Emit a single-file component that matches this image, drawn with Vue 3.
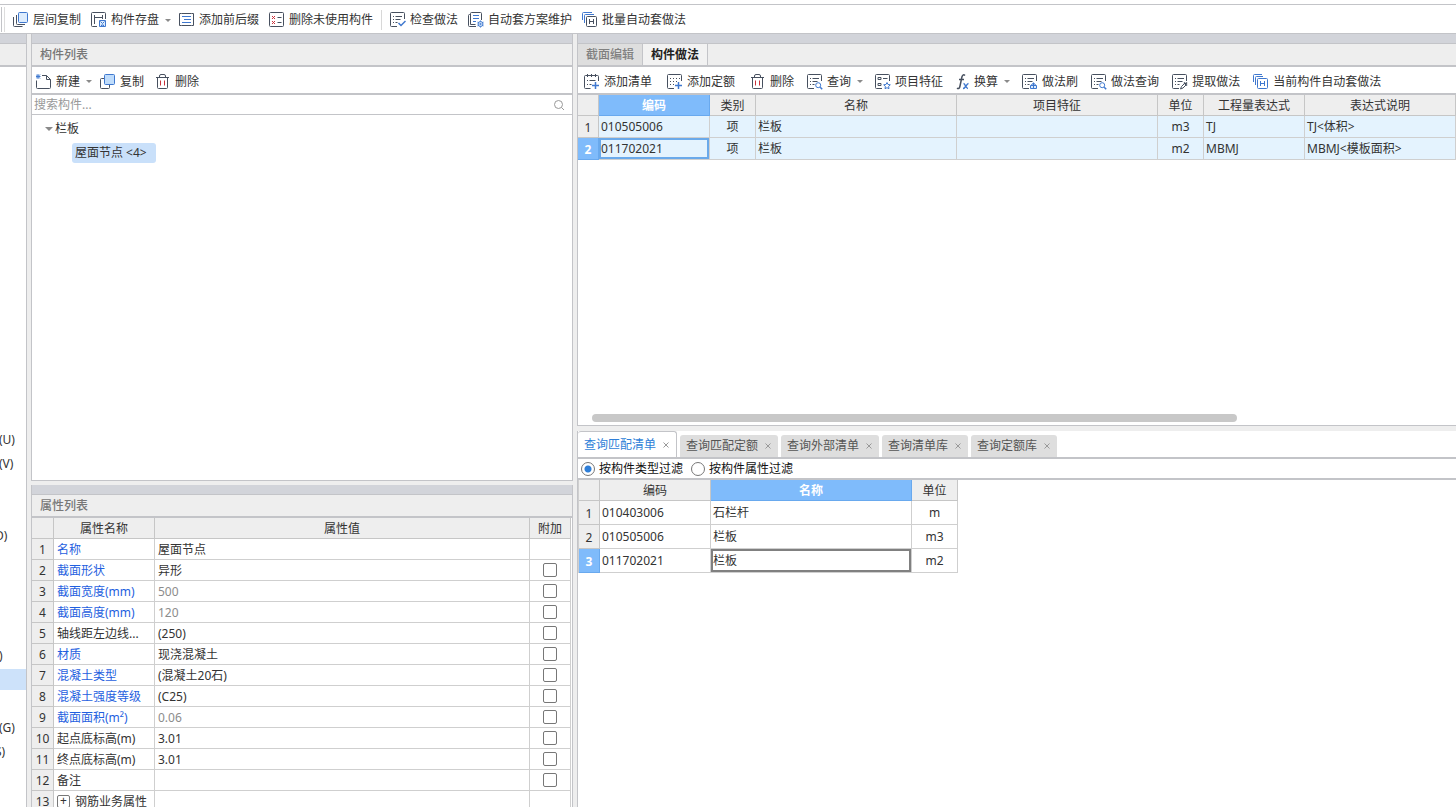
<script setup>
import { ref } from 'vue'

const mainTools = [
  { icon: 'layers', label: '层间复制' },
  { icon: 'save', label: '构件存盘', menu: true },
  { icon: 'prefix', label: '添加前后缀' },
  { icon: 'unused', label: '删除未使用构件' },
  { divider: true },
  { icon: 'check', label: '检查做法' },
  { icon: 'plan', label: '自动套方案维护' },
  { icon: 'batch', label: '批量自动套做法' },
]

const componentTools = [
  { icon: 'new', label: '新建', menu: true },
  { icon: 'copy', label: '复制' },
  { icon: 'trash', label: '删除' },
]

const editTools = [
  { icon: 'addlist', label: '添加清单' },
  { icon: 'addquota', label: '添加定额' },
  { icon: 'trash', label: '删除' },
]

const methodTools = [
  { icon: 'query', label: '查询', menu: true },
  { icon: 'feature', label: '项目特征' },
  { icon: 'fx', label: '换算', menu: true },
  { icon: 'brush', label: '做法刷' },
  { icon: 'query', label: '做法查询' },
  { icon: 'extract', label: '提取做法' },
  { icon: 'auto', label: '当前构件自动套做法' },
]

const navItems = [
  { text: '(U)' }, { text: '(V)' }, {}, {},
  { text: 'D)', clipped: true }, {}, {}, {}, {},
  { text: ')' }, { active: true }, {},
  { text: '(G)' }, { text: 'S)', clipped: true }, {},
]

const properties = [
  { name: '名称', value: '屋面节点', link: true, noCheck: true },
  { name: '截面形状', value: '异形', link: true },
  { name: '截面宽度(mm)', value: '500', link: true, muted: true },
  { name: '截面高度(mm)', value: '120', link: true, muted: true },
  { name: '轴线距左边线...', value: '(250)' },
  { name: '材质', value: '现浇混凝土', link: true },
  { name: '混凝土类型', value: '(混凝土20石)', link: true },
  { name: '混凝土强度等级', value: '(C25)', link: true },
  { name: '截面面积(m²)', value: '0.06', link: true, muted: true },
  { name: '起点底标高(m)', value: '3.01' },
  { name: '终点底标高(m)', value: '3.01' },
  { name: '备注', value: '' },
  { name: '钢筋业务属性', value: '', group: true, noCheck: true },
]

const methods = [
  { code: '010505006', kind: '项', name: '栏板', unit: 'm3', expr: 'TJ', desc: 'TJ<体积>' },
  { code: '011702021', kind: '项', name: '栏板', unit: 'm2', expr: 'MBMJ', desc: 'MBMJ<模板面积>' },
]

const queryTabs = ['查询匹配清单', '查询匹配定额', '查询外部清单', '查询清单库', '查询定额库']
const activeTab = ref(0)

const matches = [
  { code: '010403006', name: '石栏杆', unit: 'm' },
  { code: '010505006', name: '栏板', unit: 'm3' },
  { code: '011702021', name: '栏板', unit: 'm2' },
]

const filterMode = ref('type')
const keyword = ref('')
</script>

<template>
  <div class="app">
    <svg class="defs" aria-hidden="true">
      <symbol id="i-layers" viewBox="0 0 16 16">
        <rect class="b f" x="5.500" y=".5" width="9" height="10" rx="1" />
        <path class="k" d="M3.500 3v8.500a1 1 0 0 0 1 1H12" />
        <path class="k" d="M.5 5v8.500a1 1 0 0 0 1 1h8" />
      </symbol>
      <symbol id="i-save" viewBox="0 0 16 16">
        <path class="k" d="M6 14.500H1.500a1 1 0 0 1-1-1v-12a1 1 0 0 1 1-1h12a1 1 0 0 1 1 1V7M3.500 3v9M3.500 5.500h8M11.500 3v4" />
        <path class="b f" d="M8.500 8.500h6v6h-6z" />
        <path class="b" d="M9.500 9.500l2 2 2-2M10.500 14v-1h2v1" />
      </symbol>
      <symbol id="i-prefix" viewBox="0 0 16 16">
        <path class="k" d="M2.500 1.500H.5v12h2M12.500 1.500h2v12h-2M2.500 1.500h10M2.500 13.500h10" />
        <path class="b" d="M3 4.500h9M5 7.500h7M3 10.500h9" />
      </symbol>
      <symbol id="i-unused" viewBox="0 0 16 16">
        <rect class="k" x=".5" y=".5" width="14" height="14" rx="1" />
        <path class="r" d="M3 4l3 3m0-3l-3 3M3 9l3 3m0-3l-3 3" />
        <path class="k" d="M8.500 5.500h4M8.500 10.500h4" />
      </symbol>
      <symbol id="i-sheet" viewBox="0 0 16 16">
        <path class="k" d="M7 14.500H1.500a1 1 0 0 1-1-1v-12a1 1 0 0 1 1-1h12a1 1 0 0 1 1 1V7" />
        <path class="k" d="M3 4.500h1M5.500 4.500h6.500M3 7.500h1M5.500 7.500h5M3 10.500h1M5.500 10.500h2" />
      </symbol>
      <symbol id="i-check" viewBox="0 0 16 16">
        <use href="#i-sheet" />
        <path class="b w" d="M8.500 11l2.500 2.500L15.500 9" />
      </symbol>
      <symbol id="i-plan" viewBox="0 0 16 16">
        <path class="k" d="M2.500 12.500h5M2.500 12.500v-11a1 1 0 0 1 1-1h9a1 1 0 0 1 1 1V8M2.500 2.500h-1a1 1 0 0 0-1 1v10a1 1 0 0 0 1 1H8" />
        <path class="b" d="M5 3.500h6M5 6.500h6M5 9.500h3" />
        <circle class="b f" cx="12.500" cy="12" r="2.500" />
        <circle class="b" cx="12.500" cy="12" r=".7" />
        <path class="b" d="M12.500 8.500v1M12.500 14.500v1M9.500 10.200l.9.600M14.600 13.200l.9.600M9.500 13.800l.9-.6M14.600 10.800l.9-.6" />
      </symbol>
      <symbol id="i-batch" viewBox="0 0 16 16">
        <path class="b" d="M.5 8V1.500a1 1 0 0 1 1-1H10M2.500 11V3.500a1 1 0 0 1 1-1H12" />
        <rect class="k" x="4.500" y="4.500" width="10" height="10" rx="1" />
        <path class="k" d="M7.500 7v5M11.500 7v5M7.500 9.500h4" />
      </symbol>
      <symbol id="i-new" viewBox="0 0 16 16">
        <path class="k" d="M.5 6.500v7a1 1 0 0 0 1 1h12a1 1 0 0 0 1-1V5.500L10.500 1.500H6M10.500 1.500v4h4" />
        <path class="b" d="M0 .5l4 4M4 .5l-4 4M2 0v5M0 2.500h4.500" />
      </symbol>
      <symbol id="i-copy" viewBox="0 0 16 16">
        <path class="k" d="M4 4.500H1.500a1 1 0 0 0-1 1v8a1 1 0 0 0 1 1h7a1 1 0 0 0 1-1V11" />
        <rect class="b f2" x="4.500" y=".5" width="10" height="10" rx="1" />
      </symbol>
      <symbol id="i-trash" viewBox="0 0 16 16">
        <path class="k" d="M1 3.500h13M4.500 3.500v-1.500a1.500 1.500 0 0 1 1.500-1.500h3a1.500 1.500 0 0 1 1.500 1.500v1.500M2.500 3.500v10a1 1 0 0 0 1 1h8a1 1 0 0 0 1-1v-10" />
        <path class="r" d="M5.500 6.500v5M9.500 6.500v5" />
      </symbol>
      <symbol id="i-addlist" viewBox="0 0 16 16">
        <path class="k" d="M6.500 14.500H1.500a1 1 0 0 1-1-1v-11a1 1 0 0 1 1-1h12a1 1 0 0 1 1 1V7M3.500 0v3M7.500 0v3M11.500 0v3M3 6.500h1M5.500 6.500h6M3 10.500h1M5.500 10.500h2" />
        <path class="b w" d="M11.500 8v7M8 11.500h7" />
      </symbol>
      <symbol id="i-addquota" viewBox="0 0 16 16">
        <path class="k" d="M4 .5H1.500a1 1 0 0 0-1 1v12a1 1 0 0 0 1 1H7M4 .5h9.500a1 1 0 0 1 1 1V7" />
        <path class="k" d="M3 4.500h1M6 4.500h1M9 4.500h1M12 4.500h1M3 7.500h1M6 7.500h1M9 7.500h1M3 10.500h1M6 10.500h1" />
        <path class="b w" d="M11.500 8v7M8 11.500h7" />
      </symbol>
      <symbol id="i-query" viewBox="0 0 16 16">
        <use href="#i-sheet" />
        <circle class="b" cx="11.200" cy="11.200" r="2.500" />
        <path class="b w" d="M13.200 13.200l2 2" />
      </symbol>
      <symbol id="i-feature" viewBox="0 0 16 16">
        <path class="k" d="M7 14.500H1.500a1 1 0 0 1-1-1v-12a1 1 0 0 1 1-1h12a1 1 0 0 1 1 1V7" />
        <path class="k" d="M3 3.500h3v2H3zM3 9.500h3v2H3zM8 4.500h4.500" />
        <path class="b" d="M12 8.500l1 2 2.300.3-1.700 1.600.4 2.300-2-1-2 1 .4-2.300-1.700-1.600 2.300-.3z" />
      </symbol>
      <symbol id="i-fx" viewBox="0 0 14 16">
        <path class="k w" d="M9 1.500C7.500 0 6.300 1.200 5.900 3L4 12c-.4 2.300-1.500 3.200-3 2.200M3 5.500h5" />
        <path class="b w" d="M7.500 9.500c2 0 2 5 4.500 5M12.500 9.500c-2 0-3 5-5.500 5" />
      </symbol>
      <symbol id="i-brush" viewBox="0 0 16 16">
        <use href="#i-sheet" />
        <path class="b f" d="M8.500 11.500h6v3h-6z" />
        <path class="b" d="M11.500 8.500v6M9.500 11.500q0-2 2-2t2 2" />
      </symbol>
      <symbol id="i-extract" viewBox="0 0 16 16">
        <use href="#i-sheet" />
        <path class="k" d="M8.500 15l1-2.500 3-3 1.500 1.500-3 3z" />
        <path class="k w" d="M12 8.500l3 3M13.500 10l1.500-1.500" />
      </symbol>
      <symbol id="i-auto" viewBox="0 0 16 16">
        <path class="b" d="M.5 8V1.500a1 1 0 0 1 1-1H9M2.500 11V3.500a1 1 0 0 1 1-1H10" />
        <rect class="b" x="4.500" y="4.500" width="10" height="10" rx="1" />
        <path class="b" d="M7.500 7v5M11.500 7v5M7.500 9.500h4" />
      </symbol>
    </svg>

    <header class="ribbon">
      <span class="ribbon-edge"></span>
      <div class="tools main-tools">
        <template v-for="(t, i) in mainTools" :key="i">
          <span v-if="t.divider" class="divider"></span>
          <button v-else class="tool" type="button">
            <svg class="icon"><use :href="'#i-' + t.icon" /></svg>
            <span>{{ t.label }}</span>
            <i v-if="t.menu" class="caret"></i>
          </button>
        </template>
      </div>
    </header>

    <main class="workspace">
      <nav class="nav">
        <div class="band"></div>
        <div class="title"></div>
        <ul class="nav-list">
          <li v-for="(n, i) in navItems" :key="i" :class="{ clipped: n.clipped, active: n.active }">{{ n.text }}</li>
        </ul>
      </nav>

      <div class="column middle">
        <section class="panel">
          <div class="band"></div>
          <h2 class="title">构件列表</h2>
          <div class="tools bar component-tools">
            <button v-for="t in componentTools" :key="t.label" class="tool" type="button">
              <svg class="icon"><use :href="'#i-' + t.icon" /></svg>
              <span>{{ t.label }}</span>
              <i v-if="t.menu" class="caret"></i>
            </button>
          </div>
          <div class="search">
            <input v-model="keyword" type="text" placeholder="搜索构件..." aria-label="搜索构件" />
            <svg class="lens" viewBox="0 0 12 12"><circle cx="5.500" cy="5.500" r="4" /><path d="M8.500 8.500l2.500 2.500" /></svg>
          </div>
          <div class="tree">
            <button class="node" type="button"><i class="caret open"></i>栏板</button>
            <div class="leaf"><button class="chip" type="button">屋面节点 &lt;4&gt;</button></div>
          </div>
        </section>

        <section class="panel">
          <div class="band"></div>
          <h2 class="title">属性列表</h2>
          <div class="prop-wrap">
            <table class="grid props">
              <colgroup><col class="c-idx" /><col class="c-prop" /><col /><col class="c-extra" /></colgroup>
              <thead><tr><th></th><th>属性名称</th><th>属性值</th><th>附加</th></tr></thead>
              <tbody>
                <tr v-for="(p, i) in properties" :key="p.name">
                  <th scope="row">{{ i + 1 }}</th>
                  <td :class="{ link: p.link }">
                    <button v-if="p.group" class="expand" type="button" aria-label="展开">+</button>{{ p.name }}
                  </td>
                  <td :class="{ muted: p.muted }">{{ p.value }}</td>
                  <td class="center"><input v-if="!p.noCheck" class="tick" type="checkbox" :aria-label="p.name" /></td>
                </tr>
              </tbody>
            </table>
          </div>
        </section>
      </div>

      <div class="column right">
        <section class="panel">
          <div class="band"></div>
          <div class="title tabs">
            <button class="tab" type="button">截面编辑</button>
            <button class="tab on" type="button">构件做法</button>
          </div>
          <div class="tools bar method-tools">
            <div class="tools edit-group">
              <button v-for="t in editTools" :key="t.label" class="tool" type="button">
                <svg class="icon"><use :href="'#i-' + t.icon" /></svg>
                <span>{{ t.label }}</span>
              </button>
            </div>
            <button v-for="t in methodTools" :key="t.label" class="tool" type="button">
              <svg class="icon" :class="{ narrow: t.icon === 'fx' }"><use :href="'#i-' + t.icon" /></svg>
              <span>{{ t.label }}</span>
              <i v-if="t.menu" class="caret"></i>
            </button>
          </div>
          <table class="grid methods">
            <colgroup>
              <col class="c-num" /><col class="c-code" /><col class="c-unit" /><col class="c-name" />
              <col class="c-name" /><col class="c-unit" /><col class="c-expr" /><col />
            </colgroup>
            <thead>
              <tr>
                <th></th><th class="picked">编码</th><th>类别</th><th>名称</th>
                <th>项目特征</th><th>单位</th><th>工程量表达式</th><th>表达式说明</th>
              </tr>
            </thead>
            <tbody>
              <tr v-for="(m, i) in methods" :key="m.code">
                <th scope="row" :class="{ picked: i === 1 }">{{ i + 1 }}</th>
                <td :class="{ focus: i === 1 }">{{ m.code }}</td>
                <td class="center">{{ m.kind }}</td>
                <td>{{ m.name }}</td>
                <td></td>
                <td class="center">{{ m.unit }}</td>
                <td>{{ m.expr }}</td>
                <td>{{ m.desc }}</td>
              </tr>
            </tbody>
          </table>
          <div class="hscroll"><div class="thumb"></div></div>
        </section>

        <section class="panel lower">
          <div class="query-tabs">
            <button
              v-for="(q, i) in queryTabs" :key="q" type="button"
              class="qtab" :class="{ on: i === activeTab }" @click="activeTab = i"
            >
              {{ q }}
              <svg class="close" viewBox="0 0 8 8"><path d="M1.500 1.500l5 5M6.500 1.500l-5 5" /></svg>
            </button>
          </div>
          <div class="filters">
            <label><input v-model="filterMode" type="radio" name="filter" value="type" />按构件类型过滤</label>
            <label><input v-model="filterMode" type="radio" name="filter" value="prop" />按构件属性过滤</label>
          </div>
          <table class="grid matches">
            <colgroup><col class="c-num" /><col class="c-code" /><col class="c-name" /><col class="c-unit" /></colgroup>
            <thead><tr><th></th><th>编码</th><th class="picked">名称</th><th>单位</th></tr></thead>
            <tbody>
              <tr v-for="(m, i) in matches" :key="m.code">
                <th scope="row" :class="{ picked: i === 2 }">{{ i + 1 }}</th>
                <td>{{ m.code }}</td>
                <td :class="{ focus: i === 2 }">{{ m.name }}</td>
                <td class="center">{{ m.unit }}</td>
              </tr>
            </tbody>
          </table>
        </section>
      </div>
    </main>
  </div>
</template>

<style>
body { margin: 0; background: #fff; }
</style>

<style scoped>
.app {
  --line: #c3c4c8;
  --cell: #cfcfcf;
  --pane: #eeeeee;
  --pick: #7fbbfb;
  display: flex;
  flex-direction: column;
  height: 100vh;
  overflow: hidden;
  color: #333;
  font: 12px/16px "Noto Sans", "Noto Sans CJK SC", sans-serif;
}
.app *, .app *::before { box-sizing: border-box; }
button, input { font: inherit; color: inherit; }
button { padding: 0; border: 0; background: none; white-space: nowrap; }
.defs { position: absolute; width: 0; height: 0; }
.k, .b, .r { fill: none; stroke-width: 1; }
.k { stroke: #47505f; }
.b { stroke: #3f78cf; }
.r { stroke: #c9303a; }
.w { stroke-width: 1.5; }
.f { fill: #ddecfd; }
.f2 { fill: #bfdcfb; }

.ribbon {
  display: flex;
  align-items: center;
  flex: none;
  height: 30px;
  margin-top: 4px;
  border-top: 1px solid var(--line);
  border-bottom: 1px solid var(--line);
}
.ribbon-edge {
  width: 5px;
  height: 25px;
  border-right: 1px solid #ddd;
  background: linear-gradient(var(--line), var(--line)) 1px 0 / 1px 100% no-repeat;
}
.tools { display: flex; align-items: center; }
.tool { display: flex; align-items: center; gap: 4px; }
.icon { flex: none; width: 16px; height: 16px; }
.icon.narrow { width: 14px; }
.caret {
  width: 6px;
  margin: 0 -2px 0 2px;
  border: 3px solid transparent;
  border-top-color: #8a8a8a;
  border-bottom: 0;
}
.main-tools { gap: 10px; padding: 2px 0 0 8px; }
.divider { width: 1px; height: 20px; margin: 0 -2px; background: #d8d8d8; }

.workspace {
  display: grid;
  grid-template-columns: 27px minmax(0, 542fr) minmax(0, 879fr);
  column-gap: 4px;
  flex: 1;
  min-height: 0;
  background: var(--pane);
}
.band { flex: none; height: 10px; background: #d2d4da; border-bottom: 1px solid var(--line); }
.title {
  flex: none;
  height: 23px;
  margin: 0;
  padding-left: 8px;
  border-bottom: 2px solid var(--line);
  background: var(--pane);
  color: #777;
  font-size: 12px;
  font-weight: 500;
  line-height: 22px;
}
.nav {
  display: flex;
  flex-direction: column;
  min-height: 0;
  overflow: hidden;
  border-right: 1px solid var(--line);
  background: #fff;
}
.nav-list {
  flex: none;
  margin: auto 0 0;
  padding: 0 0 19px;
  list-style: none;
}
.nav-list li { height: 24px; margin-left: -1px; line-height: 24px; }
.nav-list .clipped { margin-left: -5px; }
.nav-list .active { background: #cde2fa content-box; padding: 1px 0 2px; }

.column { display: grid; min-height: 0; grid-template-columns: minmax(0, 1fr); }
.middle { grid-template-rows: minmax(0, 447fr) minmax(0, 322fr); row-gap: 4px; }
.right { grid-template-rows: minmax(0, 392fr) minmax(0, 376fr); row-gap: 5px; }
.panel {
  display: flex;
  flex-direction: column;
  min-height: 0;
  overflow: hidden;
  border: solid var(--line);
  border-width: 0 0 1px 1px;
  background: #fff;
}
.middle .panel { border-right-width: 1px; }
.middle .panel:last-child, .lower { border-bottom-width: 0; }

.bar { flex: none; height: 28px; padding-top: 3px; border-bottom: 2px solid var(--line); }
.component-tools { gap: 11px; padding-left: 4px; }
.component-tools .caret { margin-right: -3px; }
.method-tools { gap: 13px; padding-left: 6px; }
.method-tools .caret { margin-right: -1px; }
.edit-group { gap: 15px; }

.search {
  display: flex;
  align-items: center;
  flex: none;
  height: 20px;
  padding: 0 7px 0 2px;
  border-bottom: 1px solid var(--line);
}
.search input { flex: 1; min-width: 0; height: 18px; padding: 0; border: 0; outline: 0; background: none; }
.search input::placeholder { color: #999; opacity: 1; }
.lens { width: 12px; height: 12px; fill: none; stroke: #999; stroke-width: 1; }
.tree { padding-top: 2px; }
.node { display: flex; align-items: center; height: 24px; padding-left: 13px; }
.node .caret { width: 8px; margin: 0 2px 0 0; border-width: 4px 4px 0; }
.leaf { display: flex; align-items: center; height: 24px; padding-left: 40px; }
.chip { height: 20px; padding: 0 9px 0 3px; border-radius: 3px; background: #c9e0fa; }

.grid { width: 100%; table-layout: fixed; border-collapse: separate; border-spacing: 0; }
.grid th, .grid td {
  height: 21px;
  padding: 0 2px;
  overflow: hidden;
  border: solid var(--cell);
  border-width: 0 1px 1px 0;
  font-weight: 400;
  line-height: 16px;
  text-align: left;
  white-space: nowrap;
}
.grid th { padding: 2px 0 0; background: var(--pane); border-color: #c6c6c6; text-align: center; }
.grid .center { text-align: center; }
.grid .picked { background: var(--pick); border-color: #69a9ee; color: #fff; font-weight: 700; }
.c-idx { width: 22px; }
.c-prop { width: 101px; }
.c-extra { width: 41px; }
.c-num { width: 21px; }
.c-code { width: 111px; }
.c-unit { width: 46px; }
.c-name { width: 201px; }
.c-expr { width: 101px; }

.prop-wrap { min-height: 0; padding-right: 1px; overflow: hidden; background: #fff; }
.props td { padding: 2px 3px 0; }
.props .link { color: #1f5fe0; }
.props .muted { color: #8c8c8c; }
.tick {
  display: block;
  width: 14px;
  height: 14px;
  margin: 0 auto;
  appearance: none;
  border: 1px solid #777;
  border-radius: 2px;
  background: #fff;
}
.props .center { padding-top: 0; }
.expand {
  width: 13px;
  height: 13px;
  margin-right: 5px;
  border: 1px solid #777;
  border-radius: 2px;
  line-height: 10px;
  vertical-align: 1px;
}

.tabs { display: flex; padding-left: 0; }
.tab { padding: 0 8px; border-right: 1px solid var(--line); background: #dedede; color: #808080; }
.tab.on { background: #f2f2f2; color: #222; font-weight: 700; }
.methods tbody th, .methods tbody td { height: 22px; }
.methods td { background: #e4f3fe; }
.methods .focus { box-shadow: inset 0 0 0 2px #6aa9ea; }
.hscroll { margin-top: auto; padding: 0 0 3px 14px; }
.thumb { width: 74.6%; height: 8px; border-radius: 4px; background: #c8c8c8; }

.query-tabs { display: flex; align-items: flex-end; gap: 3px; flex: none; height: 28px; border-bottom: 2px solid var(--line); }
.qtab {
  display: flex;
  align-items: center;
  gap: 6px;
  height: 22px;
  padding: 0 6px;
  border-radius: 3px 3px 0 0;
  background: #dedede;
  color: #555;
}
.qtab.on { height: 26px; border: 1px solid var(--line); border-width: 1px 1px 0 0; background: #fff; color: #2f7fd8; }
.close { width: 8px; height: 8px; fill: none; stroke: #999; stroke-width: 1; }
.filters {
  display: flex;
  align-items: center;
  gap: 8px;
  flex: none;
  height: 21px;
  padding-left: 3px;
  border-bottom: 2px solid var(--line);
  color: #111;
}
.filters label { display: flex; align-items: center; gap: 4px; }
.filters input {
  width: 14px;
  height: 14px;
  margin: 0;
  appearance: none;
  border: 1px solid #777;
  border-radius: 50%;
}
.filters input:checked { background: radial-gradient(circle, #2f7fd8 3px, #fff 4px); }
.matches { width: 380px; border-left: 1px solid var(--cell); }
.matches tbody th, .matches tbody td { height: 24px; }
.matches .focus { box-shadow: inset 0 0 0 2px #808080; }
</style>
